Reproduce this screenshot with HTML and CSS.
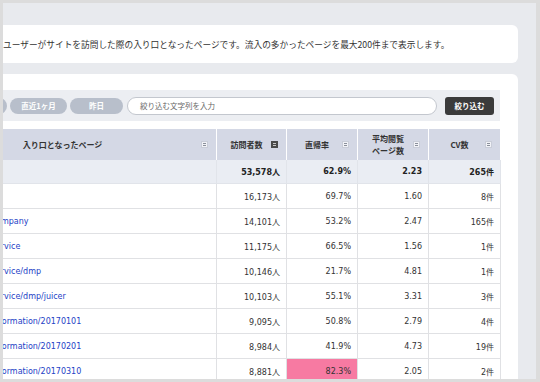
FILE: index.html
```html
<!DOCTYPE html>
<html lang="ja">
<head>
<meta charset="utf-8">
<link rel="stylesheet" href="styles.css">
</head>
<body>
<div class="frame">
  <div class="content">
    <div class="notice">ユーザーがサイトを訪問した際の入り口となったページです。流入の多かったページを最大200件まで表示します。</div>
    <div class="card">
      <div class="filter">
        <span class="pill pill-cut">直近1週間</span>
        <span class="pill pill-month">直近1ヶ月</span>
        <span class="pill pill-day">昨日</span>
        <div class="search">絞り込む文字列を入力</div>
        <button class="btn">絞り込む</button>
      </div>
      <table class="grid">
        <colgroup>
          <col class="c-page"><col class="c-num"><col class="c-num2"><col class="c-num2"><col class="c-num3">
        </colgroup>
        <thead>
          <tr>
            <th><div class="th-in"><span class="lbl">入り口となったページ</span><span class="sort"></span></div></th>
            <th><div class="th-in"><span class="lbl">訪問者数</span><span class="sort active"></span></div></th>
            <th><div class="th-in"><span class="lbl">直帰率</span><span class="sort"></span></div></th>
            <th><div class="th-in"><span class="lbl">平均閲覧<br>ページ数</span><span class="sort"></span></div></th>
            <th><div class="th-in"><span class="lbl">CV数</span><span class="sort"></span></div></th>
          </tr>
        </thead>
        <tbody>
          <tr class="total"><td></td><td>53,578人</td><td>62.9%</td><td>2.23</td><td>265件</td></tr>
          <tr><td class="page"><a>/</a></td><td>16,173人</td><td>69.7%</td><td>1.60</td><td>8件</td></tr>
          <tr><td class="page"><a>/company</a></td><td>14,101人</td><td>53.2%</td><td>2.47</td><td>165件</td></tr>
          <tr><td class="page"><a>/service</a></td><td>11,175人</td><td>66.5%</td><td>1.56</td><td>1件</td></tr>
          <tr><td class="page"><a>/service/dmp</a></td><td>10,146人</td><td>21.7%</td><td>4.81</td><td>1件</td></tr>
          <tr><td class="page"><a>/service/dmp/juicer</a></td><td>10,103人</td><td>55.1%</td><td>3.31</td><td>3件</td></tr>
          <tr><td class="page"><a>/information/20170101</a></td><td>9,095人</td><td>50.8%</td><td>2.79</td><td>4件</td></tr>
          <tr><td class="page"><a>/information/20170201</a></td><td>8,984人</td><td>41.9%</td><td>4.73</td><td>19件</td></tr>
          <tr><td class="page"><a>/information/20170310</a></td><td>8,881人</td><td class="hot">82.3%</td><td>2.05</td><td>2件</td></tr>
        </tbody>
      </table>
    </div>
  </div>
</div>
</body>
</html>
```

FILE: styles.css
```css
html, body {
  margin: 0;
  padding: 0;
}
body {
  width: 540px;
  height: 382px;
  overflow: hidden;
  font-family: "DejaVu Sans", "Noto Sans CJK JP", sans-serif;
}
.frame {
  box-sizing: border-box;
  width: 540px;
  height: 382px;
  border-style: solid;
  border-color: #dcdcdc;
  border-width: 3px 4px 3px 3px;
  background: #e8eaee;
  overflow: hidden;
}
.content {
  padding: 22px 18px 0 0;
}
.notice {
  height: 38px;
  background: #fff;
  border-radius: 0 6px 6px 0;
  display: flex;
  align-items: center;
  font-family: "Noto Sans CJK JP", sans-serif;
  font-size: 8.7px;
  color: #333;
  white-space: nowrap;
}
.card {
  margin-top: 11px;
  background: #fff;
  border-radius: 0 6px 0 0;
  padding: 16px 18px 0 0;
  height: 320px;
  overflow: hidden;
}
.filter {
  height: 31px;
  background: #eceef2;
  display: flex;
  align-items: center;
  padding-right: 6px;
}
.pill {
  height: 16px;
  border-radius: 8px;
  background: #b8bfcb;
  color: #fff;
  font-family: "Noto Sans CJK JP", sans-serif;
  font-weight: bold;
  font-size: 7.5px;
  display: flex;
  align-items: center;
  justify-content: center;
  flex: none;
}
.pill-cut {
  width: 57px;
  margin-left: -53px;
}
.pill-month {
  width: 57px;
  margin-left: 3px;
}
.pill-day {
  width: 53px;
  margin-left: 3px;
}
.search {
  box-sizing: border-box;
  width: 310px;
  height: 18px;
  margin-left: 4px;
  border: 1px solid #c3c7ce;
  border-radius: 9px;
  background: #fff;
  padding-left: 12px;
  display: flex;
  align-items: center;
  font-family: "Noto Sans CJK JP", sans-serif;
  font-size: 7.5px;
  color: #666;
  flex: none;
}
.btn {
  width: 49px;
  height: 18px;
  margin-left: 8px;
  border: 0;
  border-radius: 3px;
  background: #3b3b3b;
  color: #fff;
  font-family: "Noto Sans CJK JP", sans-serif;
  font-weight: bold;
  font-size: 7.5px;
  padding: 0;
  flex: none;
}
.grid {
  table-layout: fixed;
  border-collapse: collapse;
  width: 582px;
  margin-left: -85px;
  margin-top: 8px;
  font-size: 8px;
  color: #333;
}
.c-page { width: 298px; }
.c-num { width: 70px; }
.c-num2 { width: 71px; }
.c-num3 { width: 72px; }
.grid th {
  height: 31px;
  padding: 0;
  background: #d4d8e5;
  border-left: 1px solid #fff;
  border-right: 1px solid #fff;
  font-family: "Noto Sans CJK JP", sans-serif;
  font-weight: bold;
  font-size: 8px;
  line-height: 12px;
  color: #333;
}
.th-in {
  display: flex;
  align-items: center;
  padding: 0 8px 0 5px;
}
.lbl {
  flex: 1;
  text-align: center;
}
.sort {
  flex: none;
  box-sizing: border-box;
  width: 7px;
  height: 7px;
  background: #f1f2f7;
  position: relative;
  border: 1px solid #c9cdd8;
}
.sort::before,
.sort::after {
  content: "";
  position: absolute;
  left: 1px;
  width: 3px;
  height: 1px;
  background: #8a8f9a;
}
.sort::before { top: 1px; }
.sort::after { top: 3px; }
.sort.active {
  background: #4a4a4a;
  border-color: #4a4a4a;
}
.sort.active::before,
.sort.active::after {
  background: #c8c8c8;
}
.grid td {
  height: 24px;
  padding: 0 6px 0 0;
  text-align: right;
  border: 1px solid #e0e1e4;
  white-space: nowrap;
}
.grid .total td {
  height: 23px;
  background: #eaedf3;
  font-weight: bold;
  color: #222;
  border-color: #e1e4ea;
  border-top: 0;
}
.grid td.page {
  text-align: left;
  padding-left: 70px;
}
.page a {
  color: #1d42c6;
}
.grid td.hot {
  background: #f77aa2;
}
```
